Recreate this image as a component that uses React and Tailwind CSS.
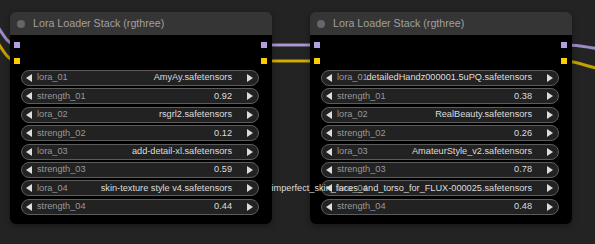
const font = { fontFamily: '"Liberation Sans", Arial, sans-serif' };

const nodes = [
    [
        ["lora_01", "AmyAy.safetensors"],
        ["strength_01", "0.92"],
        ["lora_02", "rsgrl2.safetensors"],
        ["strength_02", "0.12"],
        ["lora_03", "add-detail-xl.safetensors"],
        ["strength_03", "0.59"],
        ["lora_04", "skin-texture style v4.safetensors"],
        ["strength_04", "0.44"],
    ],
    [
        ["lora_01", "detailedHandz000001.5uPQ.safetensors"],
        ["strength_01", "0.38"],
        ["lora_02", "RealBeauty.safetensors"],
        ["strength_02", "0.26"],
        ["lora_03", "AmateurStyle_v2.safetensors"],
        ["strength_03", "0.78"],
        ["lora_04", "imperfect_skin_faces_and_torso_for_FLUX-000025.safetensors"],
        ["strength_04", "0.48"],
    ],
];

function Arrow({ dir }) {
    return (
        <svg width="6" height="8" viewBox="0 0 6 8" className="shrink-0">
            {dir === "left" ? (
                <polygon points="6,0 6,8 0,4" fill="#dddddd" />
            ) : (
                <polygon points="0,0 0,8 6,4" fill="#dddddd" />
            )}
        </svg>
    );
}

function Widget({ label, value }) {
    return (
        <div className="flex items-center h-[16px] rounded-full bg-[#222222] border border-[#5c5c5c] pl-[4px] pr-[5px] text-[9.2px] leading-none">
            <Arrow dir="left" />
            <span className="ml-[5px] text-[#999999] whitespace-nowrap">{label}</span>
            <div className="flex-1 min-w-0 flex justify-end">
                <span className="text-[#dddddd] whitespace-nowrap">{value}</span>
            </div>
            <span className="ml-[15px]" />
            <Arrow dir="right" />
        </div>
    );
}

function Node({ rows }) {
    return (
        <div className="w-[262px] shrink-0 rounded-[6px] shadow-[0_2px_6px_rgba(0,0,0,0.35)]">
            {/* title bar */}
            <div className="h-[23px] flex items-center bg-[#353535] rounded-t-[6px] pl-[7px]">
                <div className="w-[8px] h-[8px] rounded-full bg-[#666666]" />
                <span className="ml-[8px] text-[10.7px] text-[#a0a0a0] whitespace-nowrap">
                    Lora Loader Stack (rgthree)
                </span>
            </div>
            {/* body */}
            <div className="bg-black rounded-b-[6px] pt-[7px] pb-[9px]">
                <div className="flex justify-between pl-[4px] pr-[5px]">
                    <div className="w-[6px] h-[6px] bg-[#b29fdb]" />
                    <div className="w-[6px] h-[6px] bg-[#b29fdb]" />
                </div>
                <div className="flex justify-between pl-[4px] pr-[5px] mt-[10px]">
                    <div className="w-[6px] h-[6px] bg-[#ffcc00]" />
                    <div className="w-[6px] h-[6px] bg-[#ffcc00]" />
                </div>
                <div className="flex flex-col gap-[2.4px] mt-[6px] pl-[11px] pr-[13px]">
                    {rows.map(([label, value]) => (
                        <Widget key={label} label={label} value={value} />
                    ))}
                </div>
            </div>
        </div>
    );
}

export default function App() {
    return (
        <div className="relative w-[595px] h-[244px] overflow-hidden bg-[#232323]" style={font}>
            {/* links behind nodes */}
            <svg className="absolute inset-0" width="595" height="244">
                <path d="M -8 18 C 0 28, 6 45, 17 45" stroke="#9c8bc4" strokeWidth="3" fill="none" />
                <path d="M -8 34 C 0 44, 6 61, 17 61" stroke="#c4a000" strokeWidth="3" fill="none" />
                <path d="M 264 45 L 318 45" stroke="#9c8bc4" strokeWidth="3" fill="none" />
                <path d="M 264 45 L 318 45" stroke="#b9a9e2" strokeWidth="1" fill="none" />
                <path d="M 264 61 L 318 61" stroke="#c4a000" strokeWidth="3" fill="none" />
                <path d="M 264 61 L 318 61" stroke="#e2bd00" strokeWidth="1" fill="none" />
                <path d="M 566 45 C 580 45, 585 47, 600 49" stroke="#9c8bc4" strokeWidth="3" fill="none" />
                <path d="M 566 61 C 578 62, 586 66, 600 69" stroke="#c4a000" strokeWidth="3" fill="none" />
            </svg>
            <div className="relative flex gap-[38px] pt-[12px] pl-[10px]">
                {nodes.map((rows, i) => (
                    <Node key={i} rows={rows} />
                ))}
            </div>
        </div>
    );
}
